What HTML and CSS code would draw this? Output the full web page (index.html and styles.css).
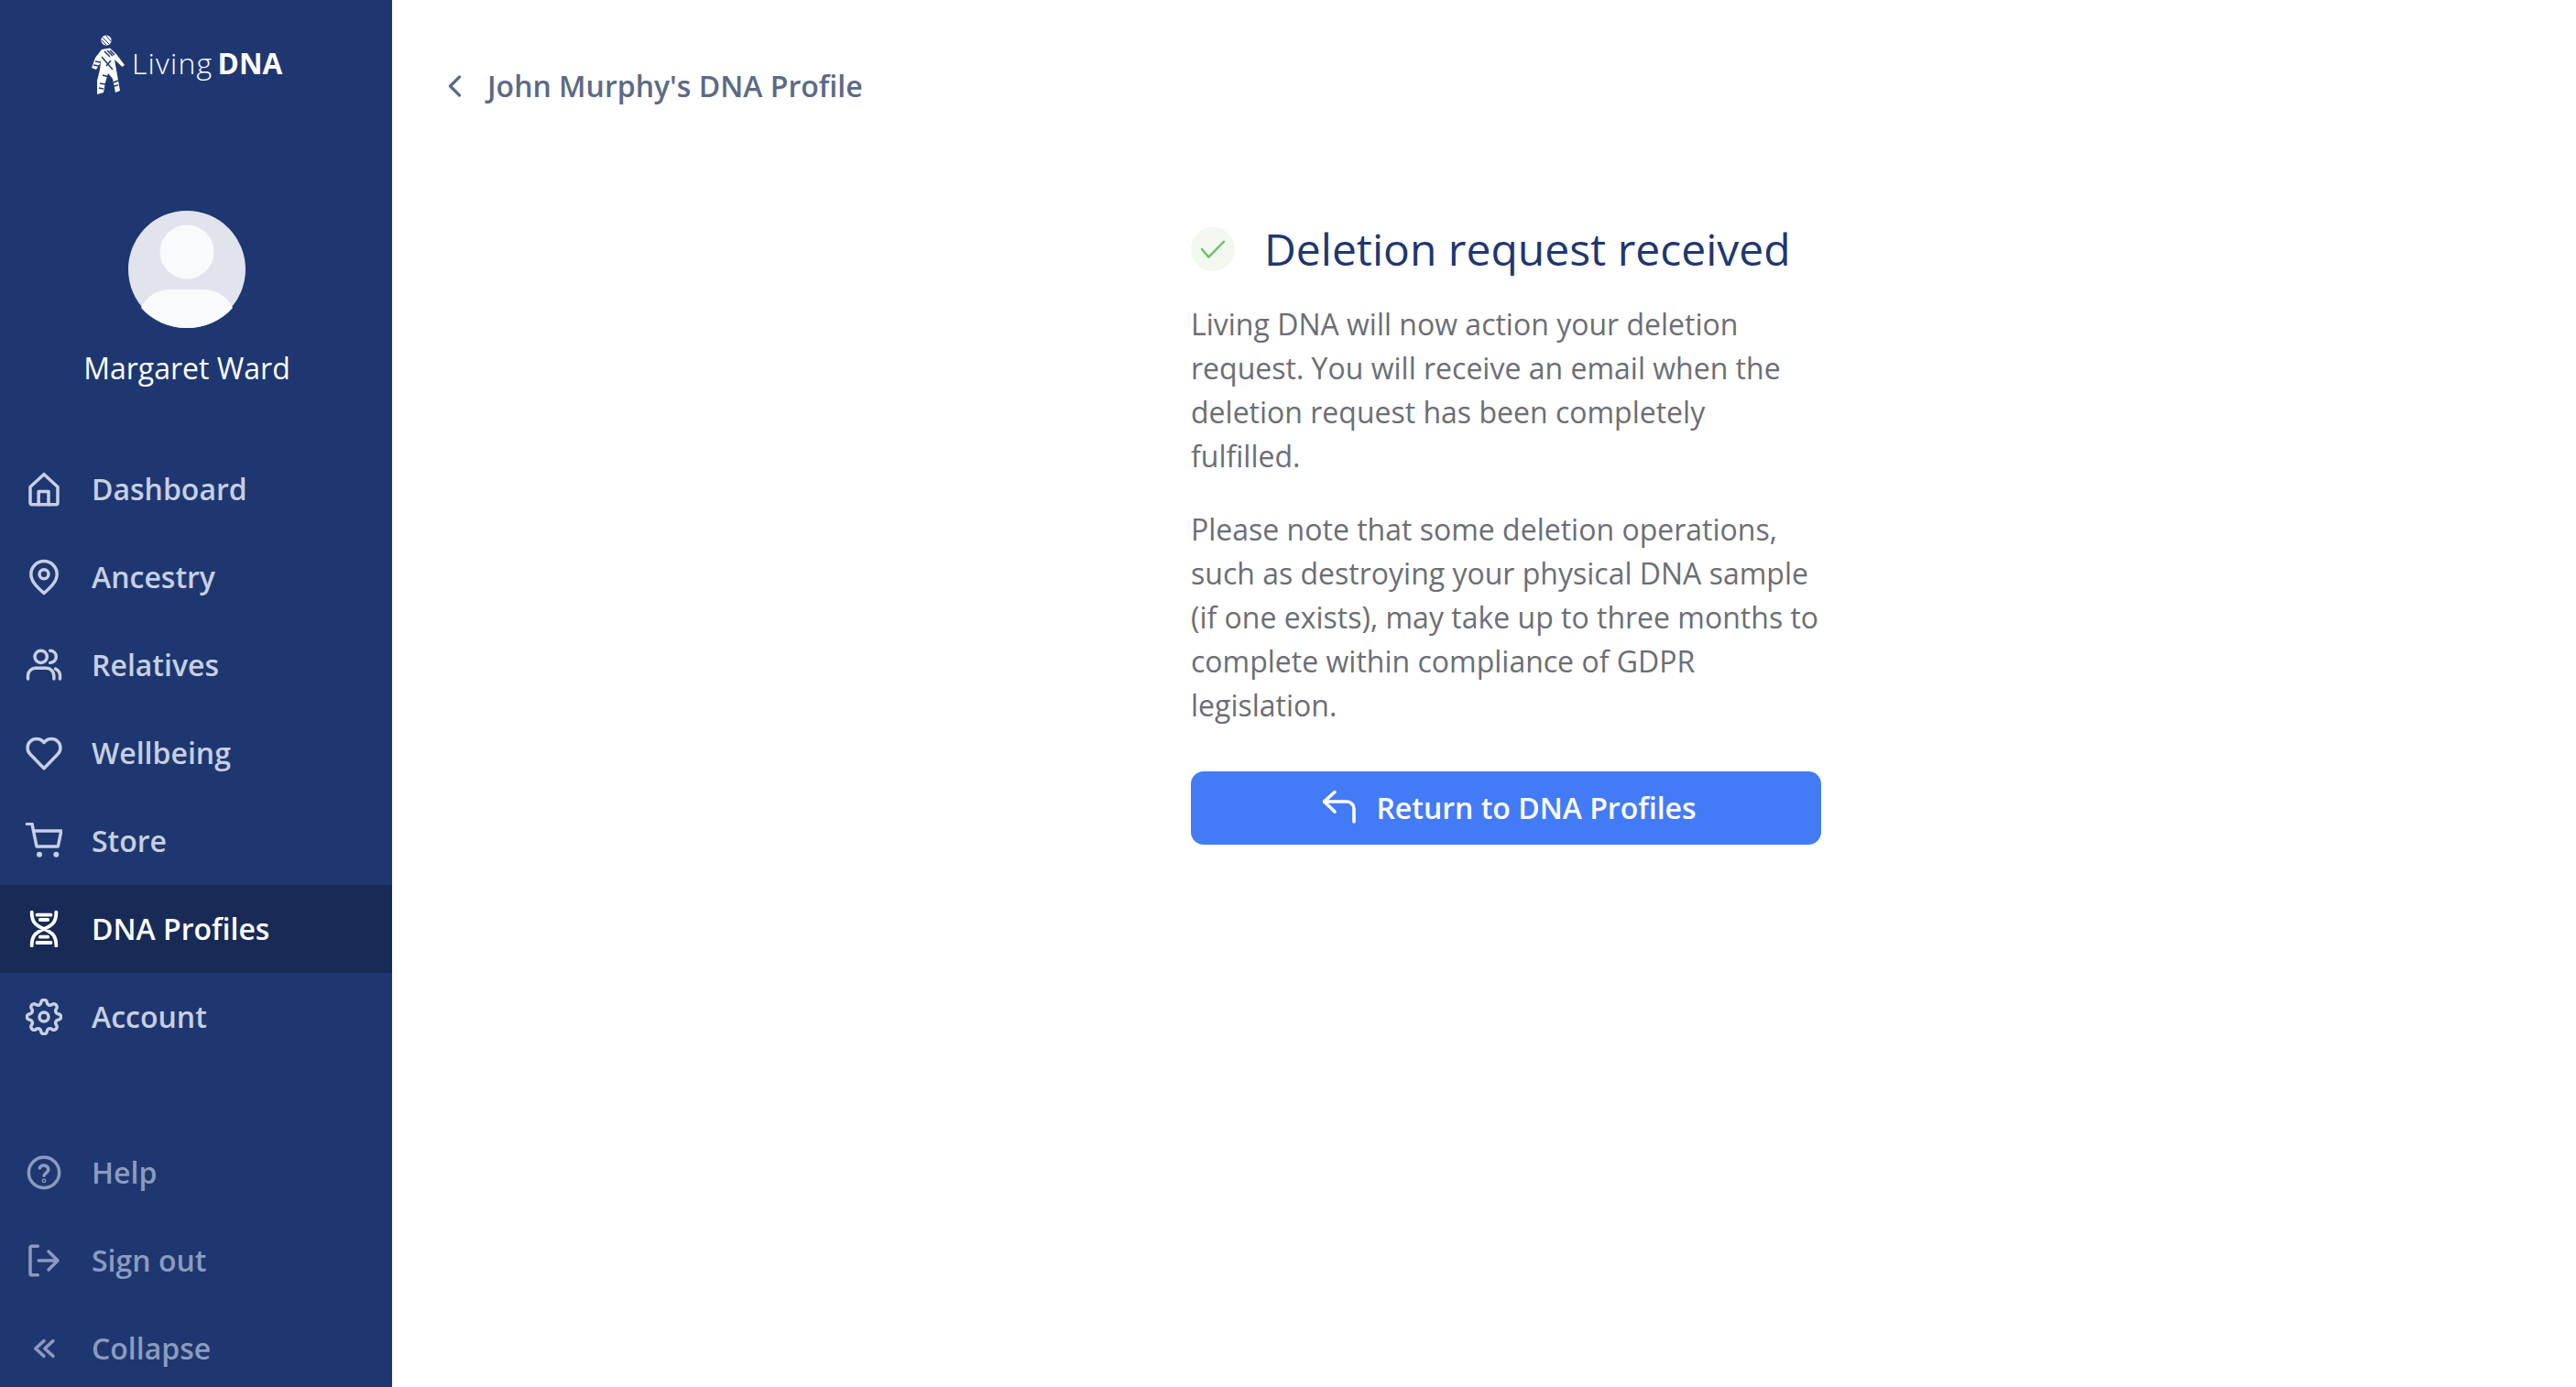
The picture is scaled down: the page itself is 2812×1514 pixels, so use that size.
FILE: index.html
```html
<!DOCTYPE html>
<html lang="en">
<head>
<meta charset="utf-8">
<title>Deletion request received</title>
<link rel="stylesheet" href="styles.css">
</head>
<body>
<div class="app">
  <aside class="sidebar">
    <div class="logo">
      <svg class="logo-mark" viewBox="0 0 40 66" aria-hidden="true">
        <circle cx="18" cy="6" r="5.6" fill="#fff"/>
        <path d="M14 3l7 7M18 1l5 6M13 6l5 5" stroke="#1e3771" stroke-width="1" fill="none"/>
        <path d="M13 16L22 14.500L29 21L38 33L35.500 35L27 27L30 44L33 61L28 63L25 48L20 42L17 52L15 63L8 65L8 50L11 38L12 30L7 38L2 36L6 25Z" fill="#fff"/>
        <path d="M16 18l6 6M19 17l6 6M22 17l5 5M13 24l12 14M6 29l6 1M4 33l6 1M14 44l7 2M11 53l6 1M10 58l5 1M26 52l5 -2M26 56l5 -1M18 34l5 -6" stroke="#1e3771" stroke-width="1.500" fill="none"/>
      </svg>
      <span class="logo-text"><span class="logo-light">Living</span> <b class="logo-bold">DNA</b></span>
    </div>
    <div class="profile">
      <svg class="avatar" viewBox="0 0 128 128" aria-hidden="true">
        <circle cx="64" cy="64" r="64" fill="#e1e4ed"/>
        <circle cx="64" cy="45" r="29.500" fill="#f9fafc"/>
        <path d="M14 106C20 93 32 86 46 86H82C96 86 108 93 114 106C102 120 84 128 64 128S26 120 14 106Z" fill="#f9fafc"/>
      </svg>
      <div class="profile-name">Margaret Ward</div>
    </div>
    <nav class="nav">
      <a class="nav-item"><svg class="icon" viewBox="0 0 24 24"><path d="M3 10.500L12 2.200L21 10.500V21a1 1 0 0 1-1 1H4a1 1 0 0 1-1-1Z"/><path d="M8.500 22V13.500H15V22"/></svg><span class="nav-label">Dashboard</span></a>
      <a class="nav-item"><svg class="icon" viewBox="0 0 24 24"><path d="M12 22.500C8 19 3.500 15 3.500 10a8.500 8.500 0 0 1 17 0C20.500 15 16 19 12 22.500Z"/><circle cx="12" cy="10" r="3"/></svg><span class="nav-label">Ancestry</span></a>
      <a class="nav-item"><svg class="icon" viewBox="0 0 24 24"><circle cx="10" cy="6.500" r="4"/><path d="M1.500 21V19a5 5 0 0 1 5-5h7a5 5 0 0 1 5 5v2"/><path d="M16 2.500a4 4 0 0 1 0 8M19.500 14.500a5 5 0 0 1 3 4.500v2"/></svg><span class="nav-label">Relatives</span></a>
      <a class="nav-item"><svg class="icon" viewBox="0 0 24 24"><path d="M12 22L3 12.800a6 6 0 0 1 0-8.500a6 6 0 0 1 8.300 0l.7.800l.7-.8a6 6 0 0 1 8.300 0a6 6 0 0 1 0 8.500Z"/></svg><span class="nav-label">Wellbeing</span></a>
      <a class="nav-item"><svg class="icon" viewBox="0 0 24 24"><path d="M.6.800H4.200L7.200 15.600H21.200L23.300 5.400H5.200"/><circle class="dot" cx="9" cy="20.800" r="1.300"/><circle class="dot" cx="20" cy="20.800" r="1.300"/></svg><span class="nav-label">Store</span></a>
      <a class="nav-item is-active"><svg class="icon icon-bold" viewBox="0 0 24 24"><path d="M4 1c0 6 2 8.500 8 11s8 5 8 11M20 1c0 6-2 8.500-8 11s-8 5-8 11"/><path d="M7.500 2.800h9M9.500 6h5M9.500 17.200h5M7.500 21h9"/></svg><span class="nav-label">DNA Profiles</span></a>
      <a class="nav-item"><svg class="icon" viewBox="0 0 24 24"><circle cx="12" cy="12" r="3"/><path d="M10 2.800a2 2 0 0 1 4 0a2 2 0 0 0 3 1.300a2 2 0 0 1 2.900 2.900a2 2 0 0 0 1.300 3a2 2 0 0 1 0 4a2 2 0 0 0-1.300 3a2 2 0 0 1-2.900 2.900a2 2 0 0 0-3 1.300a2 2 0 0 1-4 0a2 2 0 0 0-3-1.300a2 2 0 0 1-2.900-2.900a2 2 0 0 0-1.300-3a2 2 0 0 1 0-4a2 2 0 0 0 1.300-3a2 2 0 0 1 2.900-2.900a2 2 0 0 0 3-1.300Z"/></svg><span class="nav-label">Account</span></a>
    </nav>
    <nav class="nav nav-secondary">
      <a class="nav-item"><svg class="icon" viewBox="0 0 24 24"><circle cx="12" cy="12" r="10"/><path d="M9.200 9a3 3 0 0 1 5.700 1c0 2-2.900 2.500-2.900 4"/><circle cx="12" cy="17.300" r=".4"/></svg><span class="nav-label">Help</span></a>
      <a class="nav-item"><svg class="icon" viewBox="0 0 24 24"><path d="M8 2.500H4a1 1 0 0 0-1 1v17a1 1 0 0 0 1 1h4"/><path d="M8.500 12H21M15 6l6 6l-6 6"/></svg><span class="nav-label">Sign out</span></a>
      <a class="nav-item"><svg class="icon" viewBox="0 0 24 24"><path d="M12 7l-5.500 5l5.500 5M18 7l-5.500 5l5.500 5"/></svg><span class="nav-label">Collapse</span></a>
    </nav>
  </aside>
  <main class="main">
    <a class="back"><svg class="back-icon" viewBox="0 0 20 24"><path d="M15.500 2L5.500 12l10 10"/></svg><span class="nav-label">John Murphy's DNA Profile</span></a>
    <section class="panel">
      <header class="panel-head">
        <span class="check"><svg viewBox="0 0 24 24"><path d="M3 12l5.500 6.500L21 5.800"/></svg></span>
        <h1 class="title">Deletion request received</h1>
      </header>
      <p class="copy">Living DNA will now action your deletion request. You will receive an email when the deletion request has been completely fulfilled.</p>
      <p class="copy">Please note that some deletion operations, such as destroying your physical DNA sample (if one exists), may take up to three months to complete within compliance of GDPR legislation.</p>
      <a class="btn"><svg class="btn-icon" viewBox="0 0 36 36"><path d="M34 34V20a8 8 0 0 0-8-8H1.500"/><path d="M13 1.500L1.500 12L13 23"/></svg><span>Return to DNA Profiles</span></a>
    </section>
  </main>
</div>
</body>
</html>
```
FILE: styles.css
```css
* { box-sizing: border-box; }
html, body { margin: 0; height: 100%; }
body { font-family: "Open Sans", "Liberation Sans", sans-serif; background: #fff; overflow: hidden; }
.app { display: flex; height: 1514px; overflow: hidden; }

.sidebar { width: 428px; flex: none; height: 1514px; background: #1e3771; overflow: hidden; display: flex; flex-direction: column; }
.logo { flex: none; height: 230px; padding: 38px 0 0 98px; display: flex; align-items: flex-start; gap: 6px; color: #fff; }
.logo-mark { width: 40px; height: 66px; flex: none; }
.logo-text { font-size: 32px; line-height: 44px; margin-top: 9px; white-space: nowrap; }
.logo-light { font-weight: 300; letter-spacing: 1.200px; }
.logo-bold { font-weight: 700; font-size: 31.500px; margin-left: -3px; }

.profile { flex: none; display: flex; flex-direction: column; align-items: center; padding-right: 20px; }
.avatar { width: 128px; height: 128px; display: block; }
.profile-name { margin: 20px 0 2px; font-size: 32px; line-height: 48px; color: #fff; }

.nav { flex: none; display: flex; flex-direction: column; }
.profile + .nav { margin-top: 58px; }
.nav-item { height: 96px; flex: none; display: flex; align-items: center; gap: 32px; padding-left: 28px; font-size: 32px; font-weight: 600; color: #c7cfe2; }
.nav-label { padding-bottom: 2px; }
.nav-item.is-active { background: #182b56; color: #fff; }
.nav-secondary { margin-top: 74px; }
.nav-secondary .nav-item { color: #8c9bbd; }
.icon { width: 40px; height: 40px; flex: none; fill: none; stroke: currentColor; stroke-width: 2.100; stroke-linecap: round; stroke-linejoin: round; }
.icon-bold { stroke-width: 2.300; }
.icon .dot { fill: currentColor; stroke-width: 1; }

.main { flex: 1; min-width: 0; display: flex; flex-direction: column; }
.back { flex: none; display: flex; align-items: center; gap: 26px; margin: 72px 0 0 58px; height: 44px; font-size: 32px; font-weight: 600; color: #5c6a85; }
.back-icon { width: 20px; height: 24px; flex: none; fill: none; stroke: currentColor; stroke-width: 3.200; stroke-linecap: round; stroke-linejoin: round; }

.panel { flex: none; width: 688px; margin: 120px 0 0 872px; display: flex; flex-direction: column; }
.panel-head { display: flex; align-items: center; gap: 32px; height: 72px; }
.check { width: 48px; height: 48px; flex: none; border-radius: 50%; background: #f2f8f0; display: flex; align-items: center; justify-content: center; }
.check svg { width: 32px; height: 32px; fill: none; stroke: #6cbf60; stroke-width: 1.800; stroke-linecap: round; stroke-linejoin: round; }
.title { margin: 0; font-size: 48px; line-height: 72px; font-weight: 400; color: #1e3771; white-space: nowrap; }
.copy { margin: 0 0 32px; font-size: 32px; line-height: 48px; font-weight: 400; color: #6b6e75; }
.panel-head + .copy { margin-top: 22px; }
.btn { margin-top: 16px; height: 80px; border-radius: 14px; background: #437bf6; color: #fff; display: flex; align-items: center; justify-content: center; gap: 22px; padding-left: 8px; padding-bottom: 2px; font-size: 32px; font-weight: 600; }
.btn-icon { width: 36px; height: 36px; flex: none; fill: none; stroke: currentColor; stroke-width: 3.600; stroke-linecap: round; stroke-linejoin: round; }
```
